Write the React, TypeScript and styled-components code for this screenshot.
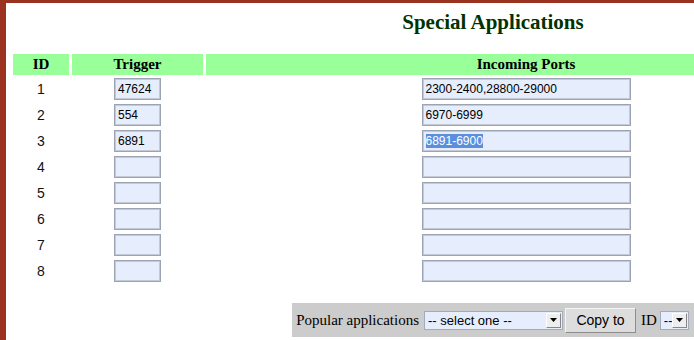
import styled, { createGlobalStyle } from 'styled-components';

const GlobalStyle = createGlobalStyle`
  html, body {
    margin: 0;
    padding: 0;
    overflow: hidden;
    background: #fff;
  }
`;

const serif = `"Liberation Serif", "Times New Roman", serif`;
const sans = `"Liberation Sans", Arial, sans-serif`;

const Viewport = styled.div`
  width: 100vw;
  height: 100vh;
  overflow: hidden;
`;

const Frame = styled.div`
  width: 974px;
  min-height: 340px;
  border-top: 3px solid #9c3320;
  border-left: 6px solid #9c3320;
  background: #fff;
  box-sizing: content-box;
`;

const Title = styled.h1`
  margin: 0;
  padding-top: 6px;
  height: 45px;
  text-align: center;
  font-family: ${serif};
  font-size: 21px;
  font-weight: bold;
  color: #003300;
  line-height: 26px;
`;

const Table = styled.div`
  margin-left: 7px;
  display: flex;
  flex-direction: column;
`;

const Grid = styled.div`
  display: grid;
  grid-template-columns: 56px 131px 640px;
  column-gap: 3px;
`;

const HeadCell = styled.div`
  height: 21px;
  line-height: 21px;
  background: #99ff99;
  text-align: center;
  font-family: ${serif};
  font-size: 15px;
  font-weight: bold;
  color: #000;
`;

const Row = styled(Grid)`
  height: 26px;
  padding-top: 3px;
  box-sizing: border-box;
  align-items: start;
`;

const RowId = styled.div`
  height: 22px;
  line-height: 22px;
  text-align: center;
  font-family: ${sans};
  font-size: 14px;
  color: #111;
`;

const FieldCell = styled.div`
  display: flex;
  justify-content: center;
`;

const Field = styled.div<{ $width: number }>`
  width: ${(p) => p.$width}px;
  height: 22px;
  box-sizing: border-box;
  border: 1px solid #9ca4b4;
  box-shadow: inset 0 0 0 1px #c3c9d5;
  background: #e6eefd;
  padding: 0 3px;
  font-family: ${sans};
  font-size: 12px;
  line-height: 20px;
  color: #000;
  white-space: nowrap;
  overflow: hidden;
`;

const Selected = styled.span`
  background: #5b8fde;
  color: #fff;
`;

const BarWrap = styled.div`
  display: flex;
  justify-content: center;
  margin-top: 20px;
`;

const Bar = styled.div`
  display: flex;
  align-items: center;
  height: 34px;
  padding: 0 5px 0 4px;
  background: #cccccc;
  font-family: ${serif};
  font-size: 15px;
  color: #000;
`;

const Label = styled.span<{ $gap: number }>`
  margin-right: ${(p) => p.$gap}px;
  white-space: nowrap;
`;

const SelectBox = styled.div<{ $width: number }>`
  width: ${(p) => p.$width}px;
  height: 19px;
  box-sizing: border-box;
  display: flex;
  align-items: center;
  border: 1px solid #a3abb9;
  background: #e6eefd;
  padding: 1px;
  font-family: ${sans};
  font-size: 13px;
`;

const SelectText = styled.span`
  flex: 1;
  padding-left: 2px;
  white-space: nowrap;
  overflow: hidden;
`;

const ArrowBtn = styled.span`
  width: 15px;
  height: 15px;
  box-sizing: border-box;
  display: flex;
  align-items: center;
  justify-content: center;
  background: #eeeeee;
  border: 1px solid;
  border-color: #ffffff #888888 #888888 #ffffff;
`;

const Button = styled.button`
  width: 71px;
  height: 25px;
  margin: 0 5px 0 2px;
  padding: 0;
  background: #dddddd;
  border: 1px solid;
  border-color: #f4f4f4 #8c8c8c #8c8c8c #f4f4f4;
  font-family: ${sans};
  font-size: 14px;
  color: #000;
`;

function Arrow() {
  return (
    <svg width="7" height="4" viewBox="0 0 7 4">
      <path d="M0 0 H7 L3.5 4 Z" fill="#000" />
    </svg>
  );
}

const rows = [
  { id: 1, trigger: '47624', ports: '2300-2400,28800-29000' },
  { id: 2, trigger: '554', ports: '6970-6999' },
  { id: 3, trigger: '6891', ports: '6891-6900', selected: true },
  { id: 4, trigger: '', ports: '' },
  { id: 5, trigger: '', ports: '' },
  { id: 6, trigger: '', ports: '' },
  { id: 7, trigger: '', ports: '' },
  { id: 8, trigger: '', ports: '' },
];

export default function App() {
  return (
    <Viewport>
      <GlobalStyle />
      <Frame>
        <Title>Special Applications</Title>
        <Table>
          <Grid>
            <HeadCell>ID</HeadCell>
            <HeadCell>Trigger</HeadCell>
            <HeadCell>Incoming Ports</HeadCell>
          </Grid>
          {rows.map((r) => (
            <Row key={r.id}>
              <RowId>{r.id}</RowId>
              <FieldCell>
                <Field $width={47}>{r.trigger}</Field>
              </FieldCell>
              <FieldCell>
                <Field $width={209}>
                  {r.selected ? <Selected>{r.ports}</Selected> : r.ports}
                </Field>
              </FieldCell>
            </Row>
          ))}
        </Table>
        <BarWrap>
          <Bar>
            <Label $gap={5}>Popular applications</Label>
            <SelectBox $width={139}>
              <SelectText>-- select one --</SelectText>
              <ArrowBtn>
                <Arrow />
              </ArrowBtn>
            </SelectBox>
            <Button>Copy to</Button>
            <Label $gap={3}>ID</Label>
            <SelectBox $width={29}>
              <SelectText>--</SelectText>
              <ArrowBtn>
                <Arrow />
              </ArrowBtn>
            </SelectBox>
          </Bar>
        </BarWrap>
      </Frame>
    </Viewport>
  );
}
